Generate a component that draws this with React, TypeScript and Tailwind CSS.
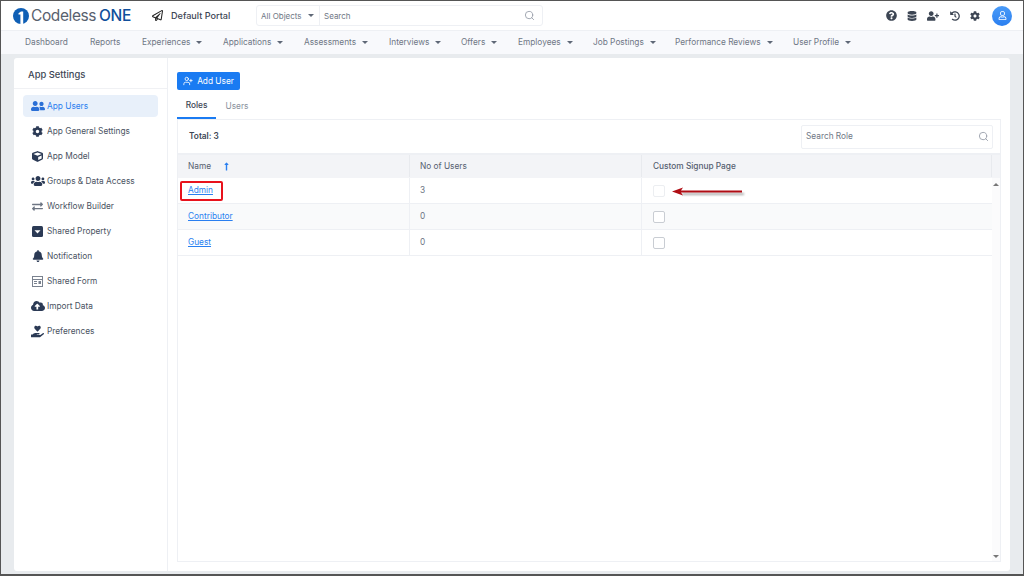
import type { ReactNode } from "react";
import { Search, UserPlus } from "lucide-react";
import {
  FaBell,
  FaCloudUploadAlt,
  FaCog,
  FaCube,
  FaDatabase,
  FaExchangeAlt,
  FaHandHoldingHeart,
  FaHistory,
  FaQuestionCircle,
  FaRegPaperPlane,
  FaRegUser,
  FaUserFriends,
  FaUserPlus,
  FaUsers,
  FaLongArrowAltUp,
} from "react-icons/fa";

const navItems = [
  { label: "Dashboard", width: "w-[65px]" },
  { label: "Reports", width: "w-[52px]" },
  { label: "Experiences", menu: true, width: "w-[81px]" },
  { label: "Applications", menu: true, width: "w-[81px]" },
  { label: "Assessments", menu: true, width: "w-[85px]" },
  { label: "Interviews", menu: true, width: "w-[72px]" },
  { label: "Offers", menu: true, width: "w-[57px]" },
  { label: "Employees", menu: true, width: "w-[75px]" },
  { label: "Job Postings", menu: true, width: "w-[82px]" },
  { label: "Performance Reviews", menu: true, width: "w-[118px]" },
  { label: "User Profile", menu: true, width: "w-[80px]" },
];

function Caret() {
  return <span className="ml-[6px] inline-block h-0 w-0 border-x-[3px] border-t-[3px] border-x-transparent border-t-[#5f6877]" />;
}

function SharedPropertyIcon() {
  return (
    <svg width="13" height="13" viewBox="0 0 13 13">
      <rect x="1" y="1" width="11" height="11" rx="1.5" fill="#2b3a55" />
      <path d="M3.5 5.2h6L6.5 8.4z" fill="#fff" />
    </svg>
  );
}

function SharedFormIcon() {
  return (
    <svg width="13" height="13" viewBox="0 0 13 13" fill="none" stroke="#7a828f">
      <rect x="1.5" y="1.5" width="10" height="10" />
      <path d="M1.5 4.5h10M3 6.5h3M3 8.5h3" />
      <rect x="7.5" y="6" width="2.5" height="3" fill="#7a828f" stroke="none" />
    </svg>
  );
}

const sidebarItems: { label: string; icon: ReactNode; active?: boolean }[] = [
  { label: "App Users", icon: <FaUserFriends size={14} />, active: true },
  { label: "App General Settings", icon: <FaCog size={11} /> },
  { label: "App Model", icon: <FaCube size={11} /> },
  { label: "Groups & Data Access", icon: <FaUsers size={14} /> },
  { label: "Workflow Builder", icon: <FaExchangeAlt size={11} className="text-[#6d7583]" /> },
  { label: "Shared Property", icon: <SharedPropertyIcon /> },
  { label: "Notification", icon: <FaBell size={12} /> },
  { label: "Shared Form", icon: <SharedFormIcon /> },
  { label: "Import Data", icon: <FaCloudUploadAlt size={14} /> },
  { label: "Preferences", icon: <FaHandHoldingHeart size={13} /> },
];

const roles = [
  { name: "Admin", users: "3", faded: true },
  { name: "Contributor", users: "0" },
  { name: "Guest", users: "0" },
];

function TopBar() {
  return (
    <div className="flex h-[29px] shrink-0 items-center bg-white">
      <svg width="16" height="16" viewBox="0 0 16 16" className="ml-[12px] shrink-0">
        <circle cx="8" cy="8" r="8" fill="#0f5fb5" />
        <path d="M5.5 5.2 8 3.6h2.2V16H7.4V6.4H5.5z" fill="#fff" />
      </svg>
      <div className="ml-[2px] flex w-[116px] items-baseline text-[15.5px] leading-none tracking-[-0.4px]">
        <span className="text-[#58616e]">Codeless</span>
        <span className="ml-[3px] font-medium text-[#0f4f9c]">ONE</span>
      </div>
      <FaRegPaperPlane size={11} className="ml-[5px] text-[#222]" />
      <span className="ml-[8px] w-[75px] text-[9.1px] font-medium text-[#3d4654]">Default Portal</span>
      <div className="ml-[10px] flex h-[21px] w-[287px] items-center rounded-[3px] border border-[#eef0f4] text-[8px] text-[#6f7785]">
        <div className="flex h-full w-[63px] shrink-0 items-center border-r border-[#eef0f4] pl-[4px]">
          All Objects
          <Caret />
        </div>
        <span className="ml-[4px] flex-1">Search</span>
        <Search size={11} className="mr-[7px] text-[#9aa1ac]" />
      </div>
      <div className="ml-auto flex items-center text-[#3d4654]">
        <FaQuestionCircle size={11} />
        <FaDatabase size={10} className="ml-[10px]" />
        <FaUserPlus size={12} className="ml-[10px]" />
        <FaHistory size={10} className="ml-[11px]" />
        <FaCog size={10} className="ml-[10px]" />
        <div className="mr-[11px] ml-[12px] flex h-5 w-5 items-center justify-center rounded-full bg-gradient-to-b from-[#4a9bf8] to-[#2a7ff0] text-white">
          <FaRegUser size={9} />
        </div>
      </div>
    </div>
  );
}

function NavBar() {
  return (
    <div className="flex h-6 shrink-0 items-center border-t border-[#eef0f4] bg-[#f8f9fc] pl-[24px] text-[8.3px] text-[#6f7785]">
      {navItems.map((item) => (
        <div key={item.label} className={`${item.width} flex shrink-0 items-center whitespace-nowrap`}>
          {item.label}
          {item.menu && <Caret />}
        </div>
      ))}
    </div>
  );
}

function Sidebar() {
  return (
    <div className="w-[154px] shrink-0 border-r border-[#eef0f4]">
      <div className="flex h-[31px] items-end border-b border-[#f0f1f4] pb-[7px] pl-[14px] text-[9.4px] font-medium leading-3 text-[#3d4654]">
        App Settings
      </div>
      <div className="px-[9px] pt-[6px]">
        {sidebarItems.map((item) => (
          <div
            key={item.label}
            className={`mb-[3px] flex h-[22px] items-center rounded-[4px] pl-[7px] text-[8.3px] ${
              item.active ? "bg-[#e8f0fa] text-[#2a7ff0]" : "text-[#4a5362]"
            }`}
          >
            <span className={`flex w-[15px] shrink-0 justify-center ${item.active ? "text-[#2a6fd6]" : "text-[#2b3a55]"}`}>
              {item.icon}
            </span>
            <span className="ml-[2px] whitespace-nowrap">{item.label}</span>
          </div>
        ))}
      </div>
    </div>
  );
}

function RoleRow({ name, users, faded, even }: { name: string; users: string; faded?: boolean; even: boolean }) {
  return (
    <div className={`relative flex h-[26px] border-b border-[#eef0f4] text-[8.3px] ${even ? "bg-[#f9fafb]" : "bg-white"}`}>
      <div className="flex w-[232px] items-center border-r border-[#eef0f4] pl-[10px]">
        <span className="text-[#2a7ff0] underline">{name}</span>
      </div>
      <div className="flex w-[232px] items-center border-r border-[#eef0f4] pl-[10px] text-[#6f7785]">{users}</div>
      <div className="flex flex-1 items-center pl-[11px]">
        <span className={`h-[12px] w-[12px] rounded-[2px] border bg-white ${faded ? "border-[#eceef1]" : "border-[#c9cdd3]"}`} />
      </div>
    </div>
  );
}

function RolesTable() {
  return (
    <div className="relative flex min-h-0 flex-1 flex-col border border-[#eef0f4]">
      <div className="flex h-[33px] shrink-0 items-center justify-between pr-[7px] pl-[11px]">
        <span className="text-[8.3px] font-semibold text-[#3d4654]">Total: 3</span>
        <div className="flex h-[24px] w-[192px] items-center justify-between rounded-[2px] border border-[#eef0f4] px-[4px] text-[8.3px] text-[#6f7785]">
          Search Role
          <Search size={11} className="-mr-[1px] text-[#9aa1ac]" />
        </div>
      </div>
      <div className="flex h-[25px] shrink-0 border-t-2 border-[#eef0f4] bg-[#f3f4f7] pb-[1px] text-[8.3px] text-[#566070]">
        <div className="flex w-[232px] items-center border-r border-[#e8eaee] pl-[10px]">
          Name
          <FaLongArrowAltUp size={9} className="ml-[11px] text-[#2a7ff0]" />
        </div>
        <div className="flex w-[232px] items-center border-r border-[#e8eaee] pl-[10px]">No of Users</div>
        <div className="flex w-[350px] items-center border-r border-[#e8eaee] pl-[11px] font-medium">Custom Signup Page</div>
      </div>
      <div className="flex min-h-0 flex-1">
        <div className="w-[814px]">
          {roles.map((role, i) => (
            <RoleRow key={role.name} {...role} even={i === 1} />
          ))}
        </div>
        <div className="flex flex-1 flex-col items-center justify-between bg-[#fbfbfc] pt-[5px] pb-[3px]">
          <span className="h-0 w-0 border-x-[3px] border-b-[3px] border-x-transparent border-b-[#777]" />
          <span className="h-0 w-0 border-x-[3px] border-t-[3px] border-x-transparent border-t-[#777]" />
        </div>
      </div>
      {/* annotations from the original screenshot */}
      <div className="absolute top-[61px] left-[2px] h-[20px] w-[43px] rounded-[2px] border-2 border-[#e8121c]" />
      <svg width="80" height="16" viewBox="0 0 80 16" className="absolute top-[65px] left-[494px]">
        <path d="M10 8 L72 8 L72 10 L10 10z" fill="#666" opacity="0.55" className="blur-[1px]" />
        <path d="M0 6.5 L11 2.5 L9 5.6 L70 5.6 L70 7.4 L9 7.4 L11 10.5z" fill="#b00d14" />
      </svg>
    </div>
  );
}

export default function App() {
  return (
    <div
      className="flex h-[576px] w-[1024px] flex-col overflow-hidden border border-b-2 border-[#555] bg-[#e8ebee]"
      style={{ fontFamily: "Inter, 'Liberation Sans', sans-serif" }}
    >
      <TopBar />
      <NavBar />
      <div className="mx-[13px] mt-[4px] mb-[3px] flex min-h-0 flex-1 rounded-[3px] bg-white">
        <Sidebar />
        <div className="flex min-w-0 flex-1 flex-col pt-[14px] pr-[9px] pb-[9px] pl-[9px]">
          <button className="flex h-[18px] w-[63px] items-center justify-center gap-[4px] rounded-[2px] bg-[#1a7bf2] text-[8.3px] text-white">
            <UserPlus size={10} />
            Add User
          </button>
          <div className="mt-[4px] flex h-[25px] shrink-0 text-[8.3px]">
            <div className="flex w-[39px] items-center justify-center border-b-2 border-[#1a7bf2] font-medium text-[#3d4654]">Roles</div>
            <div className="flex w-[42px] items-center justify-center text-[#8a919d]">Users</div>
          </div>
          <RolesTable />
        </div>
      </div>
    </div>
  );
}
